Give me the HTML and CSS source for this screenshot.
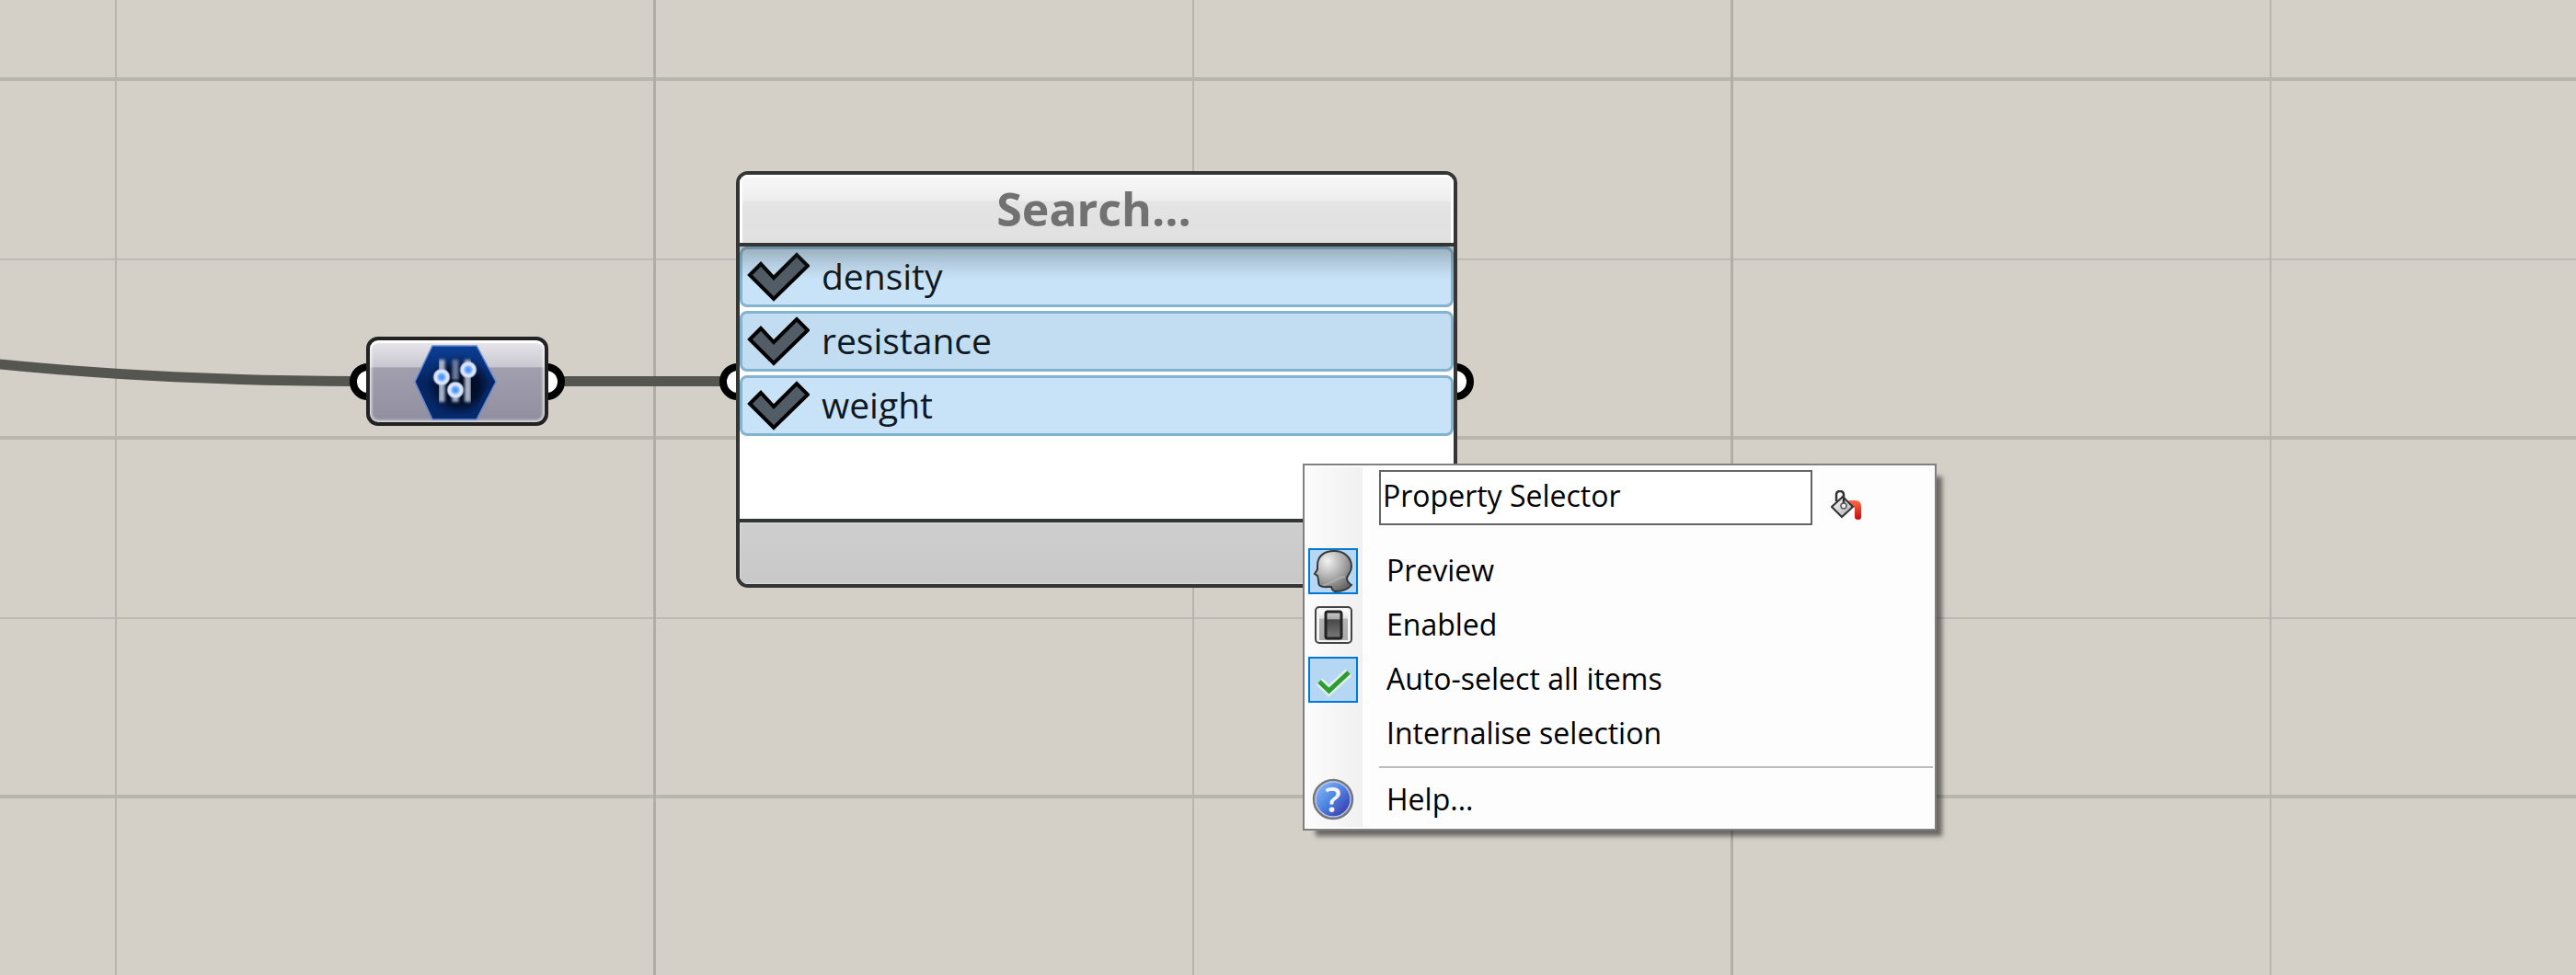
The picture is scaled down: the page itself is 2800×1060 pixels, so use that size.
FILE: index.html
```html
<!DOCTYPE html>
<html lang="en">
<head>
	<meta charset="UTF-8">
	<meta name="viewport" content="width=device-width, initial-scale=1.0">
	<title>Property Selector</title>
	<link rel="stylesheet" href="styles.css">
</head>

<body>

	<!-- Shared icon shapes -->
	<svg class="defs" width="0" height="0" aria-hidden="true">
		<symbol id="tick" viewBox="0 0 68 54">
			<path d="M3 25 L15 13 L29 28 L54 3 L66 15 L29 51 Z" fill="#525c66" stroke="#000" stroke-width="4"/>
		</symbol>
	</svg>

	<main class="canvas">

		<!-- Wires -->
		<svg class="wires" aria-hidden="true">
			<path d="M-20 393 L0 396 C120 408 240 414 385 414.5"/>
			<path d="M605 414.5 H790"/>
		</svg>

		<!-- Settings component -->
		<div class="node component">
			<span class="grip grip-in"></span>
			<span class="grip grip-out"></span>
			<div class="component-body">
				<svg class="component-icon" viewBox="0 0 90 82" role="img" aria-label="Settings">
					<defs>
						<linearGradient id="hex" x1="0" y1="0" x2="0" y2="1">
							<stop offset="0" stop-color="#0b3f96"/>
							<stop offset="0.5" stop-color="#052460"/>
							<stop offset="1" stop-color="#062a6c"/>
						</linearGradient>
						<radialGradient id="core" cx="0.55" cy="0.55" r="0.5">
							<stop offset="0" stop-color="#010714"/>
							<stop offset="0.6" stop-color="#020c24" stop-opacity="0.85"/>
							<stop offset="1" stop-color="#041a48" stop-opacity="0"/>
						</radialGradient>
						<radialGradient id="knob">
							<stop offset="0" stop-color="#3f8cff"/>
							<stop offset="0.3" stop-color="#6ea8ff"/>
							<stop offset="0.6" stop-color="#e4ecfc"/>
							<stop offset="0.8" stop-color="#ccd8f2"/>
							<stop offset="1" stop-color="#8ea4d0" stop-opacity="0"/>
						</radialGradient>
						<filter id="soft"><feGaussianBlur stdDeviation="1.5"/></filter>
					</defs>
					<path d="M20 1 H68 L89 40 L68 81 H20 L1 40 Z" fill="url(#hex)" stroke="#5f86d0" stroke-width="1.5"/>
					<path d="M24 7 H65 L82 40 L65 75 H24 L8 40 Z" fill="url(#core)"/>
					<g filter="url(#soft)" stroke="#aab4c8" stroke-width="7">
						<path d="M30 16 V62 M58.5 16 V62"/>
						<path d="M45 16 V38" stroke="#66789c"/>
						<path d="M45 44 V62"/>
					</g>
					<circle cx="30" cy="35" r="10" fill="url(#knob)"/>
					<circle cx="45" cy="49" r="10" fill="url(#knob)"/>
					<circle cx="59" cy="27" r="10" fill="url(#knob)"/>
				</svg>
			</div>
		</div>

		<!-- Property selector -->
		<div class="node selector">
			<span class="grip grip-in"></span>
			<span class="grip grip-out"></span>
			<div class="selector-body">
				<input class="selector-search" type="text" placeholder="Search..." aria-label="Search">
				<div class="selector-list">
					<label class="option">
						<input type="checkbox" checked>
						<svg class="option-tick" aria-hidden="true"><use href="#tick"/></svg>
						<span>density</span>
					</label>
					<label class="option">
						<input type="checkbox" checked>
						<svg class="option-tick" aria-hidden="true"><use href="#tick"/></svg>
						<span>resistance</span>
					</label>
					<label class="option">
						<input type="checkbox" checked>
						<svg class="option-tick" aria-hidden="true"><use href="#tick"/></svg>
						<span>weight</span>
					</label>
				</div>
				<div class="selector-footer"></div>
			</div>
		</div>

		<!-- Context menu -->
		<div class="menu" role="menu">
			<div class="menu-name">
				<input type="text" value="Property Selector" aria-label="Name">
				<button type="button" class="paint" aria-label="Colour">
					<svg viewBox="0 0 34 34" aria-hidden="true">
						<defs>
							<linearGradient id="pour" x1="0" y1="0" x2="0" y2="1">
								<stop offset="0" stop-color="#ff6a48"/>
								<stop offset="1" stop-color="#c00d0d"/>
							</linearGradient>
							<linearGradient id="bucket" x1="0" y1="0" x2="1" y2="1">
								<stop offset="0" stop-color="#fff"/>
								<stop offset="1" stop-color="#aaa"/>
							</linearGradient>
						</defs>
						<path d="M19 11 H27 Q33 11 33 18 V29 Q33 32 30 32 Q26 32 26 29 V19 L23 17 Z" fill="url(#pour)"/>
						<path d="M13 7 L24 18 L12 29 L1 18 Z" fill="url(#bucket)" stroke="#333" stroke-width="2"/>
						<path d="M6 12 V5 Q6 1 10 1 Q14 1 14 5 V14" fill="none" stroke="#333" stroke-width="2.5"/>
						<circle cx="14" cy="17" r="3" fill="#eee" stroke="#555" stroke-width="1.5"/>
					</svg>
				</button>
			</div>

			<button type="button" class="menu-item" role="menuitemcheckbox" aria-checked="true">
				<span class="menu-icon">
					<svg viewBox="0 0 46 46" aria-hidden="true">
						<defs>
							<radialGradient id="head" cx="0.35" cy="0.25" r="0.8">
								<stop offset="0" stop-color="#f2f2f2"/>
								<stop offset="0.55" stop-color="#aaa"/>
								<stop offset="1" stop-color="#666"/>
							</radialGradient>
						</defs>
						<path d="M6 17 C6 6 14 1 24 1 C35 1 43 8 43 18 C43 25 38 27 38 31 C38 34 40 36 43 38 C39 43 33 45 26 45 C24 45 22 44 21 40 C17 40 12 41 9 39 C6 37 8 33 6 28 L3 26 L6 21 Z" fill="url(#head)" stroke="#383838" stroke-width="2"/>
						<path d="M12 38 C20 38 28 29 36 29" fill="none" stroke="#d8d8d8" stroke-width="2" opacity="0.35"/>
					</svg>
				</span>
				<span class="menu-label">Preview</span>
			</button>

			<button type="button" class="menu-item" role="menuitem">
				<span class="menu-icon">
					<svg viewBox="0 0 46 46" aria-hidden="true">
						<defs>
							<linearGradient id="plate" x1="0" y1="0" x2="0" y2="1">
								<stop offset="0" stop-color="#fff"/>
								<stop offset="0.28" stop-color="#e2e2e2"/>
								<stop offset="0.3" stop-color="#b4b4b4"/>
								<stop offset="1" stop-color="#aaa"/>
							</linearGradient>
							<linearGradient id="switch" x1="0" y1="0" x2="0" y2="1">
								<stop offset="0" stop-color="#ccc"/>
								<stop offset="0.28" stop-color="#aaa"/>
								<stop offset="0.3" stop-color="#484848"/>
								<stop offset="1" stop-color="#7a7a7a"/>
							</linearGradient>
						</defs>
						<rect x="4" y="3" width="39" height="39" rx="4" fill="#f4f4f4" stroke="#444" stroke-width="2"/>
						<rect x="8" y="6" width="31" height="33" fill="url(#plate)"/>
						<rect x="15" y="8" width="17" height="29" rx="2" fill="url(#switch)" stroke="#222" stroke-width="3"/>
					</svg>
				</span>
				<span class="menu-label">Enabled</span>
			</button>

			<button type="button" class="menu-item" role="menuitemcheckbox" aria-checked="true">
				<span class="menu-icon">
					<svg viewBox="0 0 46 46" aria-hidden="true">
						<path d="M8 25 L18.500 35 L40 15" fill="none" stroke="#dfeee6" stroke-width="10"/>
						<path d="M8 25 L18.500 35 L40 15" fill="none" stroke="#2e9b33" stroke-width="5"/>
					</svg>
				</span>
				<span class="menu-label">Auto-select all items</span>
			</button>

			<button type="button" class="menu-item" role="menuitem">
				<span class="menu-icon"></span>
				<span class="menu-label">Internalise selection</span>
			</button>

			<hr class="menu-separator">

			<button type="button" class="menu-item" role="menuitem">
				<span class="menu-icon">
					<svg viewBox="0 0 46 46" aria-hidden="true">
						<defs>
							<linearGradient id="ball" x1="0" y1="0" x2="1" y2="1">
								<stop offset="0.1" stop-color="#8cb8f4"/>
								<stop offset="0.45" stop-color="#5088e4"/>
								<stop offset="0.8" stop-color="#3c48b4"/>
							</linearGradient>
						</defs>
						<circle cx="23" cy="22" r="21" fill="url(#ball)" stroke="#777" stroke-width="2.500"/>
						<circle cx="23" cy="22" r="19" fill="none" stroke="#b8c4e8" stroke-width="1.500"/>
						<text x="23" y="36" text-anchor="middle" class="help-mark">?</text>
					</svg>
				</span>
				<span class="menu-label">Help...</span>
			</button>
		</div>

	</main>

</body>
</html>
```
FILE: styles.css
```css
* {
	box-sizing: border-box;
}

body {
	margin: 0;
	font-family: "Open Sans", "Noto Sans", sans-serif;
	color: #000;
}

input,
button {
	font: inherit;
	color: inherit;
}

.defs {
	position: absolute;
}

/* Canvas with its grid: minor and major lines in both directions */
.canvas {
	position: relative;
	min-height: 100vh;
	overflow: hidden;
	background-color: #d4d0c8;
	background-image:
		linear-gradient(90deg, #b9b5ae 2px, transparent 2px),
		linear-gradient(90deg, #b1aea7 3px, transparent 3px),
		linear-gradient(#bebab3 2px, transparent 2px),
		linear-gradient(#b9b6ae 4px, transparent 4px);
	background-size: 1171px 100%, 1171px 100%, 100% 390px, 100% 390px;
	background-position: 125px 0, 710px 0, 0 281px, 0 84px;
}

.wires {
	position: absolute;
	top: 0;
	left: 0;
	width: 100%;
	height: 100%;
	fill: none;
	stroke: #565650;
	stroke-width: 11px;
}

/* Nodes */
.node {
	position: absolute;
}

.grip {
	position: absolute;
	width: 40px;
	height: 40px;
	border: 8px solid #000;
	border-radius: 50%;
	background: #fff;
}

.grip-in {
	left: -18px;
}

.grip-out {
	right: -18px;
}

.component {
	top: 366px;
	left: 398px;
	width: 198px;
}

.component .grip {
	top: 29px;
}

.component-body {
	position: relative;
	display: flex;
	justify-content: center;
	padding: 5px 10px 2px 6px;
	border: 4px solid #222;
	border-radius: 13px;
	background: linear-gradient(#e9e8ec, #c9c7d0 32%, #a19fae 34%, #918f9f);
	box-shadow: inset 0 0 3px 2px rgba(255, 255, 255, 0.7), inset 0 3px 1px #fff;
}

.component-icon {
	width: 90px;
	height: 82px;
}

.selector {
	top: 186px;
	left: 800px;
	width: 784px;
}

.selector .grip {
	top: 209px;
}

.selector-body {
	position: relative;
	overflow: hidden;
	border: 4px solid #343635;
	border-radius: 13px;
	background: #fff;
}

.selector-search {
	display: block;
	width: 100%;
	height: 74px;
	padding: 0 6px 0 0;
	border: 0;
	background: linear-gradient(#f8f8f8, #ededed 38%, #e4e4e4 40%, #e0e0e0);
	box-shadow: inset 3px 0 1px #fff, inset -3px 0 1px #fff, inset 0 3px 2px #fff;
	font-size: 50px;
	font-weight: 700;
	text-align: center;
}

.selector-search::placeholder {
	color: #717171;
	opacity: 1;
}

.selector-list {
	position: relative;
	display: flex;
	flex-direction: column;
	gap: 4px;
	height: 304px;
	border: solid #343635;
	border-width: 4px 0;
}

/* Shade that the header casts on the list */
.selector-list::after {
	content: "";
	position: absolute;
	top: 0;
	left: 0;
	right: 0;
	height: 36px;
	background: linear-gradient(rgba(60, 70, 75, 0.35), rgba(60, 70, 75, 0.15) 50%, transparent);
	pointer-events: none;
}

.option {
	position: relative;
	display: flex;
	align-items: center;
	gap: 13px;
	height: 66px;
	padding-left: 5px;
	border: 3px solid #84b3cf;
	border-radius: 8px;
	background: #c8e3f8;
	font-size: 39px;
}

.option:nth-child(even) {
	background: #c2ddf2;
}

.option input {
	position: absolute;
	inset: 0;
	margin: 0;
	appearance: none;
}

.option-tick {
	width: 68px;
	height: 54px;
	visibility: hidden;
}

.option input:checked + .option-tick {
	visibility: visible;
}

.option span {
	padding-bottom: 4px;
	color: #10181f;
}

.selector-footer {
	height: 67px;
	background: linear-gradient(#cecece, #c8c8c8);
	box-shadow: inset 0 0 2px 1px #dcdcdc;
}

/* Context menu */
.menu {
	position: absolute;
	top: 504px;
	left: 1416px;
	width: 689px;
	padding-bottom: 2px;
	border: 2px solid #808080;
	background: linear-gradient(90deg, #fcfcfc, #f0f0f0) 0 2px / 63px calc(100% - 4px) no-repeat #fdfdfd;
	box-shadow: 10px 10px 5px -4px rgba(0, 0, 0, 0.5);
	font-size: 32px;
}

.menu-name {
	display: flex;
	align-items: flex-start;
	gap: 20px;
	height: 85px;
	padding: 5px 0 0 81px;
}

.menu-name input {
	width: 471px;
	height: 60px;
	padding: 0 2px 6px;
	border: 2px solid #646464;
	background: #fff;
}

.paint {
	padding: 0;
	border: 0;
	background: none;
	margin-top: 22px;
}

.paint svg {
	display: block;
	width: 34px;
	height: 34px;
}

.menu-item {
	display: flex;
	align-items: center;
	gap: 31px;
	width: 100%;
	height: 59px;
	padding: 0 0 0 4px;
	border: 0;
	background: none;
	text-align: left;
}

.menu-icon {
	display: flex;
	align-items: center;
	justify-content: center;
	width: 54px;
	height: 50px;
	border: 2px solid transparent;
}

.menu-item[aria-checked="true"] .menu-icon {
	border-color: #0078d7;
	background: #b5d7f3;
}

.menu-icon svg {
	width: 46px;
	height: 46px;
	overflow: visible;
}

.menu-label {
	padding-bottom: 2px;
}

.help-mark {
	fill: #f4f6ff;
	font-size: 38px;
	font-weight: 600;
}

.menu-separator {
	height: 2px;
	margin: 6px 2px 5px 81px;
	border: 0;
	background: #bdbdbd;
}
```
